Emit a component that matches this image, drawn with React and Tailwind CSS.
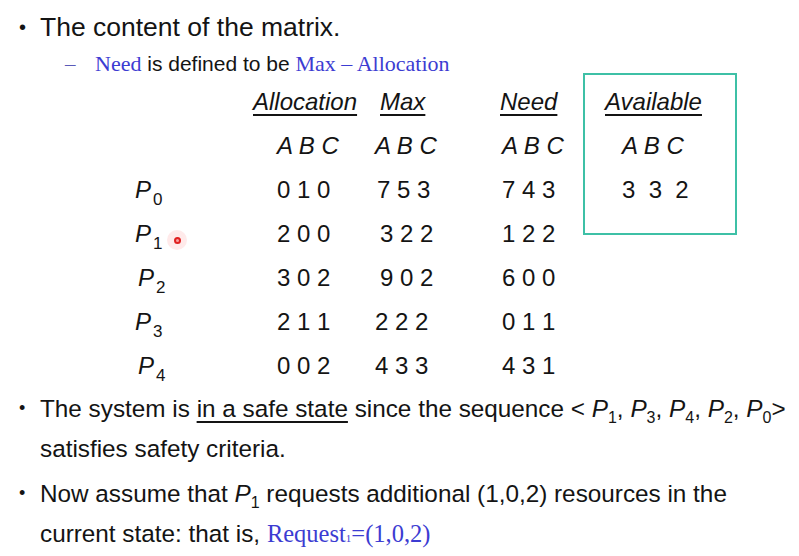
const rows = [
  { p: "0", alloc: "0 1 0", max: "7 5 3", need: "7 4 3", pl: "pl-0", mx: "pl-[2px]" },
  { p: "1", alloc: "2 0 0", max: "3 2 2", need: "1 2 2", pl: "pl-0", mx: "pl-[5px]" },
  { p: "2", alloc: "3 0 2", max: "9 0 2", need: "6 0 0", pl: "pl-[3px]", mx: "pl-[5px]" },
  { p: "3", alloc: "2 1 1", max: "2 2 2", need: "0 1 1", pl: "pl-0", mx: "pl-0" },
  { p: "4", alloc: "0 0 2", max: "4 3 3", need: "4 3 1", pl: "pl-[3px]", mx: "pl-0" },
];

// italic P with an upright subscript digit
const P = ({ n, big }) => (
  <span className="whitespace-nowrap">
    <span className="italic">P</span>
    <span className={`relative ${big ? "text-[17px] top-[7px] ml-[2px]" : "text-[16px] top-[6px]"}`}>{n}</span>
  </span>
);

const Cell = ({ children, className = "" }) => (
  <div className={`h-[44px] flex items-center whitespace-pre ${className}`}>{children}</div>
);

const uline = "underline decoration-[1.5px] underline-offset-[4px]";

export default function App() {
  return (
    <div className="relative w-[799px] h-[556px] overflow-hidden bg-white text-[#141414] font-['Liberation_Sans',Arial,sans-serif]">
      {/* TOP BULLET */}
      <div className="pt-[7px] flex text-[26.5px] leading-[40px]">
        <span className="w-[40px] pl-[19px] text-[20px]">•</span>
        <span>The content of the matrix.</span>
      </div>

      {/* SUB BULLET */}
      <div className="flex text-[21px] leading-[34px]">
        <span className="w-[95px] pl-[65px] text-[#5a5ab8] font-['Liberation_Serif',serif]">–</span>
        <span className="text-[#3c3cd2] text-[22px] font-['Liberation_Serif',serif]">Need</span>
        <span>&nbsp;is defined to be&nbsp;</span>
        <span className="text-[#3c3cd2] text-[22px] font-['Liberation_Serif',serif]">Max – Allocation</span>
      </div>

      {/* MATRIX */}
      <div className="flex items-start text-[24px] pl-[135px] mt-[-1px]">
        <div className="w-[118px]">
          <Cell />
          <Cell />
          {rows.map((r) => (
            <Cell key={r.p} className={r.pl}>
              <P n={r.p} big />
            </Cell>
          ))}
        </div>

        <div className="w-[122px]">
          <Cell className={`italic ${uline}`}>Allocation</Cell>
          <Cell className="italic pl-[24px]">A B C</Cell>
          {rows.map((r) => (
            <Cell key={r.p} className="pl-[24px]">{r.alloc}</Cell>
          ))}
        </div>

        <div className="w-[125px]">
          <Cell className="italic pl-[5px]">
            <span className={uline}>Max</span>
          </Cell>
          <Cell className="italic">A B C</Cell>
          {rows.map((r) => (
            <Cell key={r.p} className={r.mx}>{r.max}</Cell>
          ))}
        </div>

        <div className="w-[83px]">
          <Cell className="italic">
            <span className={uline}>Need</span>
          </Cell>
          <Cell className="italic pl-[2px]">A B C</Cell>
          {rows.map((r) => (
            <Cell key={r.p} className="pl-[2px]">{r.need}</Cell>
          ))}
        </div>

        {/* AVAILABLE BOX */}
        <div className="w-[154px] -mt-[7px] border-2 border-[#3ec0a6] pt-[5px] pb-[21px]">
          <Cell className="italic pl-[20px]">
            <span className={uline}>Available</span>
          </Cell>
          <Cell className="italic pl-[37px]">A B C</Cell>
          <Cell className="pl-[37px]">{"3  3  2"}</Cell>
        </div>
      </div>

      {/* BOTTOM BULLETS */}
      <div className="mt-[2px] flex text-[24.3px] leading-[37px]">
        <span className="w-[40px] pl-[19px] shrink-0 text-[18px]">•</span>
        <div>
          <div className="whitespace-nowrap">
            The system is <span className={uline}>in a safe state</span> since the sequence &lt;{" "}
            <P n="1" />, <P n="3" />, <P n="4" />, <P n="2" />, <P n="0" />&gt;
          </div>
          <div>satisfies safety criteria.</div>
        </div>
      </div>

      <div className="mt-[8px] flex text-[24.3px] leading-[37px]">
        <span className="w-[40px] pl-[19px] shrink-0 text-[18px]">•</span>
        <div>
          <div className="whitespace-nowrap">
            Now assume that <P n="1" /> requests additional (1,0,2) resources in the
          </div>
          <div className="whitespace-nowrap">
            current state: that is,{" "}
            <span className="text-[#3c3cd2] text-[24.5px] font-['Liberation_Serif',serif]">
              Request<span className="text-[11px]">1</span>=(1,0,2)
            </span>
          </div>
        </div>
      </div>

      {/* LASER POINTER */}
      <div className="absolute left-[167px] top-[230px] w-[20px] h-[20px] rounded-full bg-red-200/40 flex items-center justify-center">
        <div className="w-[7px] h-[7px] rounded-full border-2 border-[#e02020] bg-[#f6a0a0]" />
      </div>
    </div>
  );
}
